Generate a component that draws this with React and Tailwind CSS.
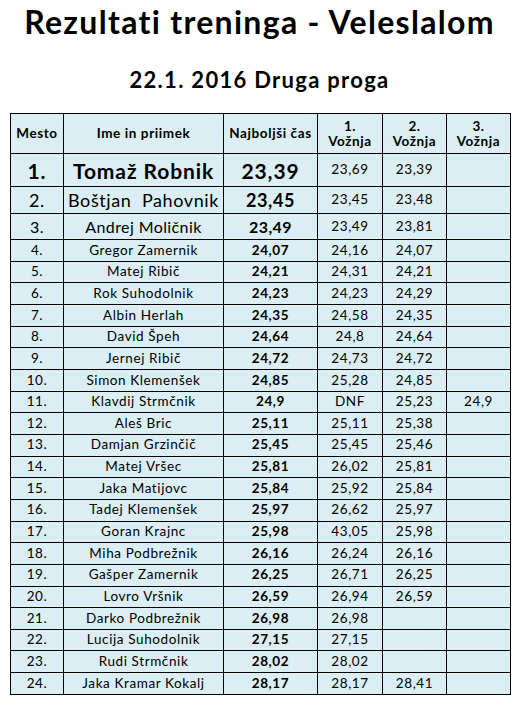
import React from "react";

const rows = [
  ["1.", "Tomaž Robnik", "23,39", "23,69", "23,39", ""],
  ["2.", "Boštjan\u00a0 Pahovnik", "23,45", "23,45", "23,48", ""],
  ["3.", "Andrej Moličnik", "23,49", "23,49", "23,81", ""],
  ["4.", "Gregor Zamernik", "24,07", "24,16", "24,07", ""],
  ["5.", "Matej Ribič", "24,21", "24,31", "24,21", ""],
  ["6.", "Rok Suhodolnik", "24,23", "24,23", "24,29", ""],
  ["7.", "Albin Herlah", "24,35", "24,58", "24,35", ""],
  ["8.", "David Špeh", "24,64", "24,8", "24,64", ""],
  ["9.", "Jernej Ribič", "24,72", "24,73", "24,72", ""],
  ["10.", "Simon Klemenšek", "24,85", "25,28", "24,85", ""],
  ["11.", "Klavdij Strmčnik", "24,9", "DNF", "25,23", "24,9"],
  ["12.", "Aleš Bric", "25,11", "25,11", "25,38", ""],
  ["13.", "Damjan Grzinčič", "25,45", "25,45", "25,46", ""],
  ["14.", "Matej Vršec", "25,81", "26,02", "25,81", ""],
  ["15.", "Jaka Matijovc", "25,84", "25,92", "25,84", ""],
  ["16.", "Tadej Klemenšek", "25,97", "26,62", "25,97", ""],
  ["17.", "Goran Krajnc", "25,98", "43,05", "25,98", ""],
  ["18.", "Miha Podbrežnik", "26,16", "26,24", "26,16", ""],
  ["19.", "Gašper Zamernik", "26,25", "26,71", "26,25", ""],
  ["20.", "Lovro Vršnik", "26,59", "26,94", "26,59", ""],
  ["21.", "Darko Podbrežnik", "26,98", "26,98", "", ""],
  ["22.", "Lucija Suhodolnik", "27,15", "27,15", "", ""],
  ["23.", "Rudi Strmčnik", "28,02", "28,02", "", ""],
  ["24.", "Jaka Kramar Kokalj", "28,17", "28,17", "28,41", ""],
];

const cell = "border border-black text-center align-middle p-0 whitespace-nowrap";
const small = "text-[13.5px] tracking-[0.6px] leading-none";

function Row({ r, i }) {
  let h = "h-[21.67px]";
  let big = small;
  let mestoW = "font-normal";
  if (i === 0) {
    h = "h-[33px]";
    big = "text-[21px] tracking-[0.9px] leading-none";
    mestoW = "font-bold";
  } else if (i === 1) {
    h = "h-[27px]";
    big = "text-[18px] tracking-[0.6px] leading-none";
  } else if (i === 2) {
    h = "h-[26px]";
    big = "text-[16px] tracking-[0.4px] leading-none";
  }
  return (
    <tr className={h}>
      <td className={`${cell} ${big} ${mestoW}`}>{r[0]}</td>
      <td className={`${cell} ${big} ${mestoW}`}>{r[1]}</td>
      <td className={`${cell} ${big} font-bold`}>{r[2]}</td>
      <td className={`${cell} ${small}`}>{r[3]}</td>
      <td className={`${cell} ${small}`}>{r[4]}</td>
      <td className={`${cell} ${small}`}>{r[5]}</td>
    </tr>
  );
}

const th = `${cell} text-[13.5px] tracking-[0.6px] font-bold leading-[15px]`;

export default function App() {
  return (
    <div
      className="w-[519px] h-[709px] bg-white text-black"
      style={{ fontFamily: "Lato, 'Noto Sans', sans-serif" }}
    >
      <div className="pt-[2px] h-[42px] leading-[40px] text-[32px] tracking-[1.3px] font-bold text-center">
        Rezultati treninga - Veleslalom
      </div>
      <div className="mt-[26px] h-[24px] leading-[24px] text-[22px] tracking-[1.3px] font-bold text-center">
        22.1. 2016 Druga proga
      </div>
      <table className="mt-[21px] ml-[10px] w-[500px] table-fixed border-collapse bg-[#daeef3]">
        <colgroup>
          <col className="w-[53px]" />
          <col className="w-[160px]" />
          <col className="w-[94px]" />
          <col className="w-[65px]" />
          <col className="w-[64px]" />
          <col className="w-[64px]" />
        </colgroup>
        <thead>
          <tr className="h-[40px]">
            <th className={th}>Mesto</th>
            <th className={th}>Ime in priimek</th>
            <th className={th}>Najboljši čas</th>
            <th className={th}>
              1.
              <br />
              Vožnja
            </th>
            <th className={th}>
              2.
              <br />
              Vožnja
            </th>
            <th className={th}>
              3.
              <br />
              Vožnja
            </th>
          </tr>
        </thead>
        <tbody>
          {rows.map((r, i) => (
            <Row key={i} r={r} i={i} />
          ))}
        </tbody>
      </table>
    </div>
  );
}
